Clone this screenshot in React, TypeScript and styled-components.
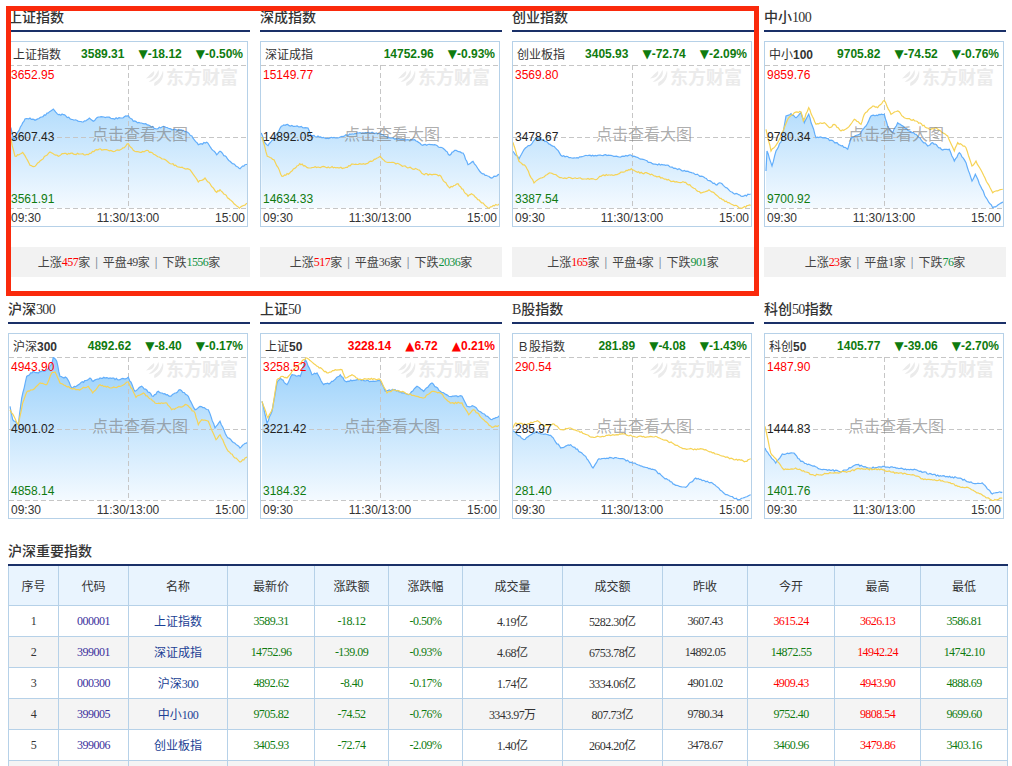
import React from "react";
import styled, { createGlobalStyle } from "styled-components";

const SERIF = `"Liberation Serif", "Noto Sans CJK SC", serif`;
const SANS = `"Liberation Sans", "Noto Sans CJK SC", sans-serif`;
const UP = "#ff0000";
const DOWN = "#0f7b0f";
const BORDER = "#b6d1e8";
const NAVY = "#1a3068";

type Pt = [number, number];

type Panel = {
	title: string;
	name: string;
	price: string;
	change?: string;
	pct: string;
	up: boolean;
	high: string;
	mid: string;
	low: string;
	breadth?: [number, number, number];
	blue: Pt[];
	yellow: Pt[];
};

// points are read off a 3x crop, so x runs 0-716 and y runs 0-430
const PANELS: Panel[] = [
	{
		title: "上证指数", name: "上证指数", price: "3589.31", change: "-18.12", pct: "-0.50%", up: false,
		high: "3652.95", mid: "3607.43", low: "3561.91", breadth: [457, 49, 1556],
		blue: [[0,185],[6,189],[15,225],[38,180],[48,162],[63,159],[78,166],[98,156],[118,144],[133,132],[148,149],[163,149],[183,161],[203,166],[223,171],[241,159],[253,169],[268,156],[293,156],[313,161],[338,159],[358,152],[373,169],[398,174],[423,182],[443,192],[463,184],[493,194],[523,196],[548,212],[568,239],[593,232],[623,269],[633,259],[663,289],[693,311],[708,299],[716,298]],
		yellow: [[0,210],[6,224],[18,274],[41,262],[63,301],[78,304],[98,284],[123,261],[148,274],[163,266],[213,267],[238,269],[263,254],[293,254],[318,259],[338,252],[358,236],[373,256],[393,262],[413,256],[438,269],[463,282],[488,297],[523,309],[543,314],[568,351],[588,339],[623,382],[633,374],[663,404],[691,430],[716,414]],
	},
	{
		title: "深成指数", name: "深证成指", price: "14752.96", pct: "-0.93%", up: false,
		high: "15149.77", mid: "14892.05", low: "14634.33", breadth: [517, 36, 2036],
		blue: [[1,204],[9,229],[21,242],[41,219],[61,184],[76,179],[101,184],[141,189],[151,212],[191,219],[231,219],[251,212],[281,206],[321,202],[358,206],[386,219],[421,224],[461,224],[481,239],[521,239],[551,254],[566,271],[581,256],[606,264],[621,299],[636,289],[661,324],[691,339],[716,329]],
		yellow: [[3,216],[19,274],[39,284],[63,334],[86,324],[116,296],[146,309],[171,306],[221,307],[251,309],[276,297],[316,296],[336,287],[358,274],[376,291],[401,294],[436,306],[471,314],[486,327],[536,331],[566,369],[591,356],[621,394],[631,386],[681,429],[716,416]],
	},
	{
		title: "创业指数", name: "创业板指", price: "3405.93", change: "-72.74", pct: "-2.09%", up: false,
		high: "3569.80", mid: "3478.67", low: "3387.54", breadth: [165, 4, 901],
		blue: [[0,259],[18,282],[33,254],[58,234],[68,219],[88,224],[123,244],[148,274],[188,279],[223,272],[278,269],[318,276],[355,271],[398,286],[418,296],[458,301],[518,319],[568,334],[608,359],[623,354],[658,382],[688,394],[713,387]],
		yellow: [[0,232],[18,289],[38,304],[63,354],[83,339],[113,324],[148,339],[198,339],[248,344],[268,331],[308,329],[355,311],[373,322],[408,326],[478,349],[518,352],[563,384],[588,374],[628,404],[683,429],[713,421]],
	},
	{
		title: "中小100", name: "中小100", price: "9705.82", change: "-74.52", pct: "-0.76%", up: false,
		high: "9859.76", mid: "9780.34", low: "9700.92", breadth: [23, 1, 76],
		blue: [[3,318],[6,258],[21,303],[33,258],[51,223],[63,153],[78,146],[93,158],[108,143],[118,173],[131,148],[153,218],[178,218],[213,233],[248,253],[258,218],[283,208],[303,183],[318,153],[358,148],[368,183],[383,203],[398,173],[433,198],[453,208],[488,243],[503,233],[533,255],[553,253],[568,288],[583,263],[603,293],[621,348],[631,328],[663,398],[683,428],[716,411]],
		yellow: [[3,193],[18,258],[38,233],[58,188],[68,163],[88,143],[108,141],[115,168],[131,128],[153,178],[178,173],[193,188],[208,178],[228,198],[248,188],[268,163],[288,178],[298,148],[323,123],[338,128],[358,106],[378,148],[398,138],[418,158],[453,168],[493,193],[513,188],[548,213],[568,258],[578,233],[603,248],[621,303],[633,288],[683,383],[713,373]],
	},
	{
		title: "沪深300", name: "沪深300", price: "4892.62", change: "-8.40", pct: "-0.17%", up: false,
		high: "4943.90", mid: "4901.02", low: "4858.14",
		blue: [[3,148],[11,188],[28,203],[38,123],[53,58],[73,43],[88,48],[113,38],[128,23],[133,1],[143,13],[153,58],[173,63],[188,93],[208,83],[243,63],[253,73],[273,63],[303,63],[333,68],[358,61],[378,103],[398,88],[433,118],[448,103],[483,118],[513,98],[538,118],[558,158],[573,148],[598,158],[618,213],[633,193],[653,238],[693,273],[716,255]],
		yellow: [[3,158],[28,203],[41,138],[53,105],[78,93],[93,78],[113,83],[128,48],[138,45],[153,78],[183,93],[208,98],[238,88],[251,108],[273,83],[303,93],[333,88],[358,75],[381,121],[403,108],[438,138],[473,138],[488,158],[533,143],[558,168],[568,203],[578,188],[598,193],[621,248],[633,233],[658,283],[693,315],[716,300]],
	},
	{
		title: "上证50", name: "上证50", price: "3228.14", change: "6.72", pct: "0.21%", up: true,
		high: "3258.52", mid: "3221.42", low: "3184.32",
		blue: [[3,133],[18,198],[33,163],[48,78],[58,63],[78,83],[93,53],[118,58],[133,8],[153,53],[168,48],[188,83],[208,78],[238,53],[253,73],[293,68],[333,73],[358,71],[373,103],[398,98],[443,113],[468,88],[488,103],[513,78],[538,103],[563,118],[603,118],[618,148],[638,148],[663,168],[693,188],[716,175]],
		yellow: [[3,133],[21,183],[35,153],[48,68],[63,58],[78,63],[93,43],[128,8],[138,3],[163,23],[198,48],[223,38],[243,38],[253,63],[273,53],[293,68],[323,65],[358,68],[378,108],[398,98],[433,108],[468,118],[488,123],[513,103],[538,108],[568,138],[603,138],[623,173],[638,158],[668,188],[693,211],[716,205]],
	},
	{
		title: "B股指数", name: "Ｂ股指数", price: "281.89", change: "-4.08", pct: "-1.43%", up: false,
		high: "290.54", mid: "285.97", low: "281.40",
		blue: [[0,221],[33,248],[68,225],[113,235],[143,273],[173,263],[218,298],[240,333],[258,305],[298,303],[328,305],[358,318],[423,338],[448,358],[488,385],[518,391],[548,363],[598,378],[638,413],[678,428],[713,413]],
		yellow: [[0,213],[8,198],[38,203],[73,191],[93,208],[123,201],[143,218],[173,213],[238,240],[268,238],[328,230],[368,240],[428,238],[478,258],[513,275],[578,278],[638,301],[698,313],[713,305]],
	},
	{
		title: "科创50指数", name: "科创50", price: "1405.77", change: "-39.06", pct: "-2.70%", up: false,
		high: "1487.90", mid: "1444.83", low: "1401.76",
		blue: [[0,273],[12,293],[32,318],[52,291],[87,288],[107,313],[172,338],[232,343],[277,323],[312,333],[357,328],[402,335],[452,338],[502,353],[582,363],[622,378],[652,378],[682,411],[712,405]],
		yellow: [[0,208],[17,288],[57,338],[92,333],[147,355],[202,348],[252,343],[282,335],[352,338],[377,345],[442,353],[472,365],[532,371],[582,388],[612,393],[682,431],[712,423]],
	},
];

const COLUMNS = [
	["序号", 51], ["代码", 70], ["名称", 99], ["最新价", 87], ["涨跌额", 74], ["涨跌幅", 74],
	["成交量", 100], ["成交额", 100], ["昨收", 85], ["今开", 87], ["最高", 86], ["最低", 87],
] as const;

const ROWS = [
	["000001", "上证指数", "3589.31", "-18.12", "-0.50%", "4.19亿", "5282.30亿", "3607.43", "3615.24", "3626.13", "3586.81"],
	["399001", "深证成指", "14752.96", "-139.09", "-0.93%", "4.68亿", "6753.78亿", "14892.05", "14872.55", "14942.24", "14742.10"],
	["000300", "沪深300", "4892.62", "-8.40", "-0.17%", "1.74亿", "3334.06亿", "4901.02", "4909.43", "4943.90", "4888.69"],
	["399005", "中小100", "9705.82", "-74.52", "-0.76%", "3343.97万", "807.73亿", "9780.34", "9752.40", "9808.54", "9699.60"],
	["399006", "创业板指", "3405.93", "-72.74", "-2.09%", "1.40亿", "2604.20亿", "3478.67", "3460.96", "3479.86", "3403.16"],
];

const GlobalStyle = createGlobalStyle`
	html, body {
		margin: 0;
		padding: 0;
		height: 766px;
		overflow: hidden;
		background: #fff;
	}
`;

const Page = styled.div`
	position: relative;
	width: 1012px;
	height: 766px;
	box-sizing: border-box;
	padding: 6px 0 0 8px;
	overflow: hidden;
	font-family: ${SERIF};
	color: #333;
`;

const Highlight = styled.div`
	position: absolute;
	left: 6px;
	top: 6px;
	width: 753px;
	height: 290px;
	box-sizing: border-box;
	border: 5px solid #fa2a0c;
	z-index: 5;
	pointer-events: none;
`;

const PanelGrid = styled.div`
	display: grid;
	grid-template-columns: repeat(4, 242px);
	column-gap: 10px;
	row-gap: 21px;
`;

const SectionTitle = styled.div`
	height: 24px;
	line-height: 24px;
	font-size: 14px;
	font-weight: 500;
	color: #333;
	border-bottom: 2px solid ${NAVY};
`;

const Digits = styled.span`
	letter-spacing: -0.045em;
`;

const ChartBox = styled.div`
	width: 240px;
	height: 186px;
	box-sizing: border-box;
	margin-top: 9px;
	border: 1px solid ${BORDER};
	display: flex;
	flex-direction: column;
	background: #fff;
`;

const Quote = styled.div<{ $up: boolean }>`
	height: 23px;
	display: flex;
	align-items: center;
	padding: 0 4px;
	font-family: ${SANS};
	font-size: 12px;
	color: ${({ $up }) => ($up ? UP : DOWN)};
`;

const QuoteName = styled.span`
	flex: 1;
	color: #333;
	white-space: nowrap;
	b {
		font-weight: bold;
	}
`;

const QuoteValue = styled.b`
	margin-left: 14px;
	font-weight: bold;
	white-space: nowrap;
`;

const Arrow = styled.span`
	font-family: "DejaVu Sans", sans-serif;
	font-weight: normal;
`;

const Plot = styled.div`
	position: relative;
	width: 238px;
	height: 144px;
	svg {
		display: block;
	}
`;

const AxisLabels = styled.div`
	position: absolute;
	left: 2px;
	top: 3px;
	bottom: 3px;
	display: flex;
	flex-direction: column;
	justify-content: space-between;
	font-family: ${SANS};
	font-size: 12px;
	line-height: 14px;
`;

const AxisLabel = styled.span<{ $color: string }>`
	color: ${({ $color }) => $color};
`;

const Watermark = styled.div`
	position: absolute;
	right: 9px;
	top: 3px;
	display: flex;
	align-items: center;
	gap: 2px;
	font-family: ${SANS};
	font-size: 18px;
	line-height: 20px;
	font-weight: bold;
	color: #ebebeb;
`;

const ClickHint = styled.div`
	position: absolute;
	left: 83px;
	top: 61px;
	font-family: ${SANS};
	font-size: 16px;
	line-height: 18px;
	color: rgba(120, 120, 120, 0.62);
	white-space: nowrap;
`;

const TimeAxis = styled.div`
	height: 17px;
	display: flex;
	justify-content: space-between;
	align-items: center;
	padding: 0 2px;
	font-family: ${SANS};
	font-size: 12px;
	color: #333;
`;

const Breadth = styled.div`
	margin-top: 20px;
	height: 30px;
	display: flex;
	align-items: center;
	justify-content: center;
	background: #f2f2f2;
	font-size: 12px;
	color: #444;
`;

const Count = styled(Digits)<{ $color?: string }>`
	color: ${({ $color }) => $color || "inherit"};
`;

const Divider = styled.span`
	margin: 0 5px;
	color: #7d8b99;
	font-weight: bold;
`;

const TableSection = styled.div`
	width: 1000px;
	margin-top: 21px;
`;

const Table = styled.table`
	width: 1000px;
	table-layout: fixed;
	border-collapse: separate;
	border-spacing: 0;
	font-size: 12px;
	th,
	td {
		padding: 0;
		text-align: center;
		border-right: 1px solid ${BORDER};
		border-bottom: 1px solid ${BORDER};
	}
	th:first-child,
	td:first-child {
		border-left: 1px solid ${BORDER};
	}
`;

const HeadCell = styled.th`
	height: 40px;
	font-weight: normal;
	background: #e9f4fe;
	color: #333;
	box-sizing: border-box;
`;

const Row = styled.tr<{ $striped: boolean }>`
	background: ${({ $striped }) => ($striped ? "#f4f4f4" : "#fff")};
`;

const Cell = styled.td<{ $color?: string }>`
	height: 30px;
	color: ${({ $color }) => $color || "#333"};
`;

// digits in the reference's serif run narrower than Liberation's, so squeeze only them
function Mixed({ text }: { text: string }) {
	return (
		<>
			{text.split(/([\d.\-%]+)/).map((part, i) =>
				i % 2 ? <Digits key={i}>{part}</Digits> : part,
			)}
		</>
	);
}

function QuoteTitle({ name }: { name: string }) {
	return (
		<>
			{name.split(/(\d+)/).map((part, i) => (i % 2 ? <b key={i}>{part}</b> : part))}
		</>
	);
}

// small tick noise on top of the read-off points, seeded so the line never changes
function trace(points: Pt[], seed: number): Pt[] {
	let s = seed;
	const next = () => {
		s = (s * 9301 + 49297) % 233280;
		return s / 233280 - 0.5;
	};
	const out: Pt[] = [];
	points.forEach((p, i) => {
		if (i === 0) {
			out.push([p[0] / 3, p[1] / 3]);
			return;
		}
		const prev = points[i - 1];
		const steps = Math.max(1, Math.round((p[0] - prev[0]) / 4));
		for (let k = 1; k <= steps; k++) {
			const t = k / steps;
			const jitter = k === steps ? 0 : next() * 1.5;
			out.push([(prev[0] + (p[0] - prev[0]) * t) / 3, (prev[1] + (p[1] - prev[1]) * t) / 3 + jitter]);
		}
	});
	return out;
}

const toPath = (pts: Pt[]) =>
	pts.map((p, i) => `${i ? "L" : "M"}${p[0].toFixed(1)} ${p[1].toFixed(1)}`).join("");

function Logo() {
	return (
		<svg width="18" height="18" viewBox="0 0 18 18" fill="#ebebeb">
			<path d="M8 2c1 3-1 6-5 7L0 9.500C3 7 5 4 8 2z" />
			<path d="M12.500 1c1.500 5-1.500 9-7 11.500L2.500 13C7 10 10 6 12.500 1z" />
			<path d="M17 1.500c1.500 7-2.500 13-8.500 15.500-.5-1-.5-2 0-3.500C13 11 15.500 7 17 1.500z" />
		</svg>
	);
}

function Chart({ panel, index }: { panel: Panel; index: number }) {
	const blue = trace(panel.blue, index * 37 + 11);
	const yellow = trace(panel.yellow, index * 53 + 29);
	const area = `${toPath(blue)}L${blue[blue.length - 1][0].toFixed(1)} 143L${blue[0][0].toFixed(1)} 143Z`;
	const grad = `chart-fill-${index}`;
	return (
		<Plot>
			<svg width="238" height="144" viewBox="0 0 238 144">
				<defs>
					<linearGradient id={grad} gradientUnits="userSpaceOnUse" x1="0" y1="0" x2="0" y2="143">
						<stop offset="0" stopColor="#98d0fb" />
						<stop offset="1" stopColor="#f4faff" />
					</linearGradient>
				</defs>
				<path d={area} fill={`url(#${grad})`} />
				<g stroke="#c6c6c6" strokeDasharray="5 3" fill="none">
					<path d="M0 0.5H238" />
					<path d="M0 72.5H238" />
					<path d="M0 143.5H238" />
					<path d="M119.5 0V144" />
				</g>
				<path d={toPath(blue)} fill="none" stroke="#62aefb" strokeWidth="1.2" />
				<path d={toPath(yellow)} fill="none" stroke="#f6d356" strokeWidth="1.2" />
			</svg>
			<Watermark>
				<Logo />
				东方财富
			</Watermark>
			<ClickHint>点击查看大图</ClickHint>
			<AxisLabels>
				<AxisLabel $color={UP}>{panel.high}</AxisLabel>
				<AxisLabel $color="#222">{panel.mid}</AxisLabel>
				<AxisLabel $color={DOWN}>{panel.low}</AxisLabel>
			</AxisLabels>
		</Plot>
	);
}

function IndexPanel({ panel, index }: { panel: Panel; index: number }) {
	const arrow = <Arrow>{panel.up ? "▲" : "▼"}</Arrow>;
	return (
		<div>
			<SectionTitle>
				<Mixed text={panel.title} />
			</SectionTitle>
			<ChartBox>
				<Quote $up={panel.up}>
					<QuoteName>
						<QuoteTitle name={panel.name} />
					</QuoteName>
					<QuoteValue>{panel.price}</QuoteValue>
					{panel.change && (
						<QuoteValue>
							{arrow}
							{panel.change}
						</QuoteValue>
					)}
					<QuoteValue>
						{arrow}
						{panel.pct}
					</QuoteValue>
				</Quote>
				<Chart panel={panel} index={index} />
				<TimeAxis>
					<span>09:30</span>
					<span>11:30/13:00</span>
					<span>15:00</span>
				</TimeAxis>
			</ChartBox>
			{panel.breadth && (
				<Breadth>
					上涨<Count $color={UP}>{panel.breadth[0]}</Count>家
					<Divider>|</Divider>
					平盘<Count>{panel.breadth[1]}</Count>家
					<Divider>|</Divider>
					下跌<Count $color="#0f9140">{panel.breadth[2]}</Count>家
				</Breadth>
			)}
		</div>
	);
}

const versus = (value: string, prev: string) => (parseFloat(value) > parseFloat(prev) ? UP : DOWN);

function IndexRow({ row, index }: { row: string[]; index: number }) {
	const [code, name, last, change, pct, volume, amount, prev, open, high, low] = row;
	return (
		<Row $striped={index % 2 === 1}>
			<Cell>
				<Digits>{index + 1}</Digits>
			</Cell>
			<Cell $color="#3b2f9c">
				<Digits>{code}</Digits>
			</Cell>
			<Cell $color="#1c3f94">
				<Mixed text={name} />
			</Cell>
			<Cell $color={DOWN}>
				<Digits>{last}</Digits>
			</Cell>
			<Cell $color={DOWN}>
				<Digits>{change}</Digits>
			</Cell>
			<Cell $color={DOWN}>
				<Digits>{pct}</Digits>
			</Cell>
			<Cell>
				<Mixed text={volume} />
			</Cell>
			<Cell>
				<Mixed text={amount} />
			</Cell>
			<Cell>
				<Digits>{prev}</Digits>
			</Cell>
			<Cell $color={versus(open, prev)}>
				<Digits>{open}</Digits>
			</Cell>
			<Cell $color={versus(high, prev)}>
				<Digits>{high}</Digits>
			</Cell>
			<Cell $color={versus(low, prev)}>
				<Digits>{low}</Digits>
			</Cell>
		</Row>
	);
}

export default function App() {
	return (
		<Page>
			<GlobalStyle />
			<PanelGrid>
				{PANELS.map((panel, i) => (
					<IndexPanel key={panel.title} panel={panel} index={i} />
				))}
			</PanelGrid>
			<TableSection>
				<SectionTitle>沪深重要指数</SectionTitle>
				<Table>
					<colgroup>
						{COLUMNS.map(([label, width]) => (
							<col key={label} width={width} />
						))}
					</colgroup>
					<thead>
						<tr>
							{COLUMNS.map(([label]) => (
								<HeadCell key={label}>{label}</HeadCell>
							))}
						</tr>
					</thead>
					<tbody>
						{ROWS.map((row, i) => (
							<IndexRow key={row[0]} row={row} index={i} />
						))}
						<Row $striped>
							{COLUMNS.map(([label]) => (
								<Cell key={label} />
							))}
						</Row>
					</tbody>
				</Table>
			</TableSection>
			<Highlight />
		</Page>
	);
}
